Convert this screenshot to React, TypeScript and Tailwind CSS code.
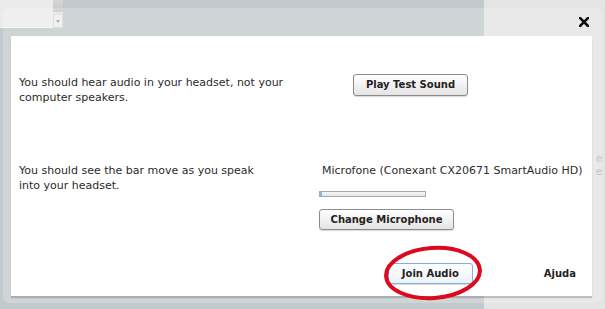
import React from 'react';

const font = { fontFamily: '"DejaVu Sans", Verdana, sans-serif' };

const Btn = ({ children, focused, className }: { children: React.ReactNode; focused?: boolean; className?: string }) => (
  <button
    className={
      'flex items-center justify-center rounded-[3px] border bg-gradient-to-b from-white to-[#e4e4e4] text-[10px] leading-[12px] font-bold text-[#222] shadow-[0_1px_1px_rgba(0,0,0,0.15)] ' +
      (focused ? 'border-[#7fb0de] ' : 'border-[#8c8c8c] ') +
      (className || '')
    }
  >
    {children}
  </button>
);

export default function App() {
  return (
    <div className="relative w-[605px] h-[309px] overflow-hidden bg-[#c3cacd]" style={font}>
      {/* page behind the dialog */}
      <div className="absolute left-0 top-0 w-[53px] h-[28px] bg-[#ebebeb] border-b border-[#f6f6f6]" />
      <div className="absolute left-[53px] top-0 w-[10px] h-[28px] bg-[#e4e4e4] flex flex-col">
        <div className="h-[12px] bg-gradient-to-b from-[#d6d6d6] to-[#c8c8c8]" />
        <div className="mt-[2px] h-[14px] bg-[#ededed] border border-[#dadada] flex items-center justify-center">
          <span className="w-0 h-0 border-l-[2px] border-r-[2px] border-t-[3px] border-l-transparent border-r-transparent border-t-[#9a9a9a]" />
        </div>
      </div>
      <div className="absolute left-[484px] top-0 w-[121px] h-[309px] bg-[#e4e4e4]" />
      <div className="absolute left-[596px] top-[152px] text-[10px] leading-[13px] text-[#b5b5b5]">
        <div>e</div>
        <div>e</div>
      </div>

      {/* dialog */}
      <div className="absolute left-[3px] top-[8px] w-[599px] h-[295px] rounded-[6px] bg-white/20 flex flex-col">
        <div className="h-[28px] flex items-center justify-end pr-[13px]">
          <svg width="10" height="10" viewBox="0 0 10 10">
            <path d="M1 1 L9 9 M9 1 L1 9" stroke="#111" strokeWidth="2.6" strokeLinecap="square" />
          </svg>
        </div>
        <div className="ml-[8px] mr-[10px] h-[260px] bg-white shadow-[0_2px_1px_rgba(0,0,0,0.18)] flex flex-col text-[11px] leading-[15px] text-[#2b2b2b]">
          <div className="mt-[38px] flex items-start">
            <p className="ml-[8px] w-[285px] mt-[1px]">You should hear audio in your headset, not your computer speakers.</p>
            <div className="ml-[15px] pl-[34px] flex">
              <Btn className="w-[115px] h-[22px]">Play Test Sound</Btn>
            </div>
          </div>

          <div className="mt-[58px] flex items-start">
            <p className="ml-[8px] w-[285px]">
              You should see the bar move as you speak
              <br />
              into your headset.
            </p>
            <div className="ml-[15px] flex flex-col items-start">
              <span className="ml-[3px]">Microfone (Conexant CX20671 SmartAudio HD)</span>
              <div className="mt-[13px] w-[107px] h-[6px] border border-[#a3abb0] bg-gradient-to-b from-[#f4f6f7] to-[#e3e7ea] flex">
                <div className="w-[2px] bg-[#8fb6d8]" />
              </div>
              <Btn className="mt-[12px] w-[135px] h-[21px]">Change Microphone</Btn>
            </div>
          </div>

          <div className="mt-[33px] flex items-center justify-end pr-[16px]">
            <Btn focused className="w-[85px] h-[21px] from-white to-[#eef2f5]">Join Audio</Btn>
            <span className="ml-[71px] text-[10px] font-bold text-[#222]">Ajuda</span>
          </div>
        </div>
      </div>

      {/* red annotation */}
      <svg className="absolute left-[380px] top-[245px]" width="108" height="60" viewBox="0 0 108 60">
        <ellipse cx="53" cy="28" rx="47" ry="25" fill="none" stroke="#dc0a1e" strokeWidth="4" transform="rotate(-4 53 28)" />
      </svg>
    </div>
  );
}
